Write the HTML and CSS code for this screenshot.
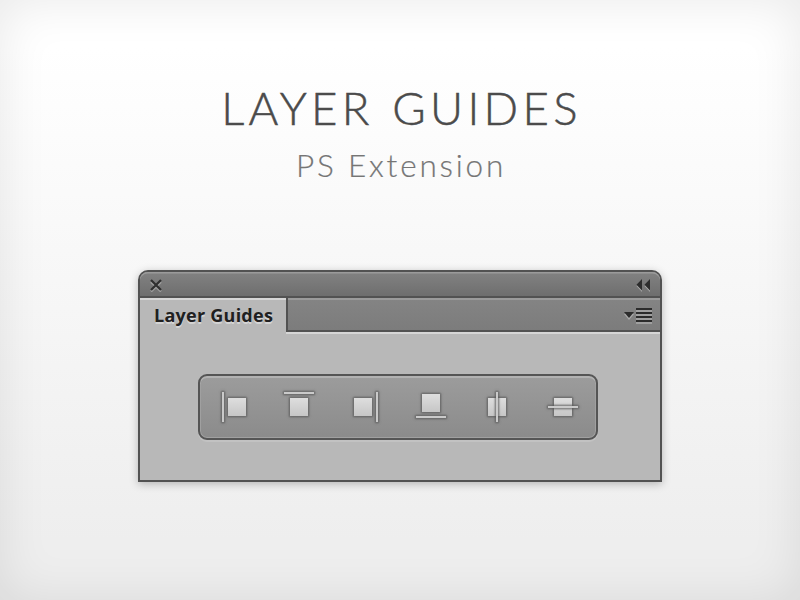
FILE: index.html
```html
<!DOCTYPE html>
<html lang="en">
<head>
<meta charset="utf-8">
<title>Layer Guides</title>
<link rel="stylesheet" href="styles.css">
</head>
<body>
<main class="stage">
  <h1 class="title">LAYER GUIDES</h1>
  <p class="subtitle">PS Extension</p>
  <section class="panel">
    <div class="titlebar">
      <svg class="close" width="14" height="14" viewBox="0 0 14 14">
        <path class="glyph-light" d="M2 4l10 9.500M12 4L2 13.500"/>
        <path class="glyph-dark" d="M2 2l10 10M12 2L2 12"/>
      </svg>
      <svg class="collapse" width="16" height="14" viewBox="0 0 16 14">
        <path class="arrow-light" d="M6 3v11L0.500 8zM14 3v11L8.500 8z"/>
        <path class="arrow-dark" d="M6 1v11.500L0.500 6.700zM14 1v11.500L8.500 6.700z"/>
      </svg>
    </div>
    <div class="tabs">
      <div class="tab">Layer Guides</div>
      <div class="strip">
        <svg width="28" height="16" viewBox="0 0 28 16">
          <path class="arrow-light" d="M0 6h10L5 12z"/>
          <path class="arrow-dark" d="M0 4h10L5 10z"/>
          <path class="line-light" d="M12 2h16v2H12zM12 6h16v2H12zM12 10h16v2H12zM12 14h16v2H12z"/>
          <path class="line-dark" d="M12 0h16v2H12zM12 4h16v2H12zM12 8h16v2H12zM12 12h16v2H12z"/>
        </svg>
      </div>
    </div>
    <div class="content">
      <div class="toolbar">
        <svg class="tool" viewBox="0 0 66 62">
          <defs>
            <linearGradient id="face" x1="0" y1="0" x2="0" y2="1">
              <stop offset="0" stop-color="#dedede"/><stop offset="1" stop-color="#c6c6c6"/>
            </linearGradient>
          </defs>
          <rect class="box" x="28" y="22" width="18" height="18"/><rect class="bar" x="22" y="16" width="2" height="30"/>
        </svg>
        <svg class="tool" viewBox="0 0 66 62"><rect class="box" x="24" y="22" width="18" height="18"/><rect class="bar" x="18" y="16" width="30" height="2"/></svg>
        <svg class="tool" viewBox="0 0 66 62"><rect class="box" x="22" y="22" width="18" height="18"/><rect class="bar" x="44" y="16" width="2" height="30"/></svg>
        <svg class="tool" viewBox="0 0 66 62"><rect class="box" x="24" y="18" width="18" height="18"/><rect class="bar" x="18" y="40" width="30" height="2"/></svg>
        <svg class="tool" viewBox="0 0 66 62"><rect class="box" x="24" y="22" width="18" height="18"/><rect class="bar" x="32" y="16" width="2" height="30"/></svg>
        <svg class="tool" viewBox="0 0 66 62"><rect class="box" x="24" y="22" width="18" height="18"/><rect class="bar" x="18" y="30" width="30" height="2"/></svg>
      </div>
    </div>
  </section>
</main>
</body>
</html>
```
FILE: styles.css
```css
* { box-sizing: border-box; }
body { margin: 0; }
.stage {
  width: 800px;
  height: 600px;
  overflow: hidden;
  display: flex;
  flex-direction: column;
  align-items: center;
  padding-top: 78px;
  background: linear-gradient(#fff 0, #fff 8%, #eee 90%, #eee 100%);
  box-shadow: inset 0 0 50px rgba(0, 0, 0, .09);
}
.title, .subtitle {
  margin: 0;
  font-family: Lato, sans-serif;
  font-weight: 300;
  white-space: nowrap;
}
.title {
  height: 61px;
  padding-left: 3px;
  line-height: 60px;
  font-size: 45.5px;
  letter-spacing: 4.3px;
  word-spacing: 2px;
  color: #4b4b4b;
  -webkit-text-stroke: .5px #4b4b4b;
}
.subtitle {
  height: 51px;
  padding-left: 2px;
  line-height: 52px;
  font-size: 31.5px;
  letter-spacing: 2.8px;
  color: #757575;
  -webkit-text-stroke: .2px #757575;
}
.panel {
  width: 524px;
  height: 212px;
  margin-top: 80px;
  border: 2px solid #525252;
  border-radius: 10px 10px 0 0;
  background: #b8b8b8;
  box-shadow: 0 2px 8px rgba(0, 0, 0, .25);
}
.titlebar {
  height: 26px;
  display: flex;
  justify-content: space-between;
  align-items: center;
  padding: 2px 8px 0 9px;
  border-bottom: 2px solid #525252;
  border-radius: 8px 8px 0 0;
  background: linear-gradient(#828282, #6e6e6e);
  box-shadow: inset 0 2px 0 -0.5px #9b9b9b;
}
.titlebar svg, .strip svg, .tool { display: block; }
.glyph-light, .glyph-dark { fill: none; stroke-width: 2.2; }
.glyph-light { stroke: #a0a0a0; }
.glyph-dark { stroke: #303030; }
.arrow-light { fill: #aaa; }
.arrow-dark { fill: #2c2c2c; }
.line-light { fill: #a0a0a0; }
.line-dark { fill: #2c2c2c; }
.tabs { display: flex; height: 36px; }
.tab {
  width: 146px;
  padding-left: 14px;
  font: bold 18px/34px "Open Sans", sans-serif;
  letter-spacing: .25px;
  color: #202020;
  text-shadow: 0 2px 0 #d4d4d4;
  white-space: nowrap;
  box-shadow: inset 0 2px #d6d6d6;
}
.strip {
  flex: 1;
  height: 34px;
  display: flex;
  justify-content: flex-end;
  padding: 10px 8px 0 0;
  border-left: 2px solid #525252;
  border-bottom: 2px solid #525252;
  background: linear-gradient(#848484, #7c7c7c);
  box-shadow: inset 0 2px #9b9b9b, 0 2px #d6d6d6;
}
.content { padding: 40px 0 0 58px; }
.toolbar {
  width: 400px;
  height: 66px;
  display: flex;
  border: 2px solid #555;
  border-radius: 9px;
  background: linear-gradient(#9c9c9c, #8b8b8b);
  box-shadow: inset 0 2px #b2b2b2, inset 0 0 0 1px #a0a0a0, 0 2px #c2c2c2;
}
.tool {
  width: 66px;
  height: 62px;
}
.box, .bar {
  stroke: rgba(95, 95, 95, .3);
  stroke-width: 3px;
  stroke-linejoin: round;
  paint-order: stroke;
  filter: drop-shadow(0 0 1px rgba(75, 75, 75, .8));
}
.box { fill: url(#face); }
.bar { fill: #cacaca; }
```
